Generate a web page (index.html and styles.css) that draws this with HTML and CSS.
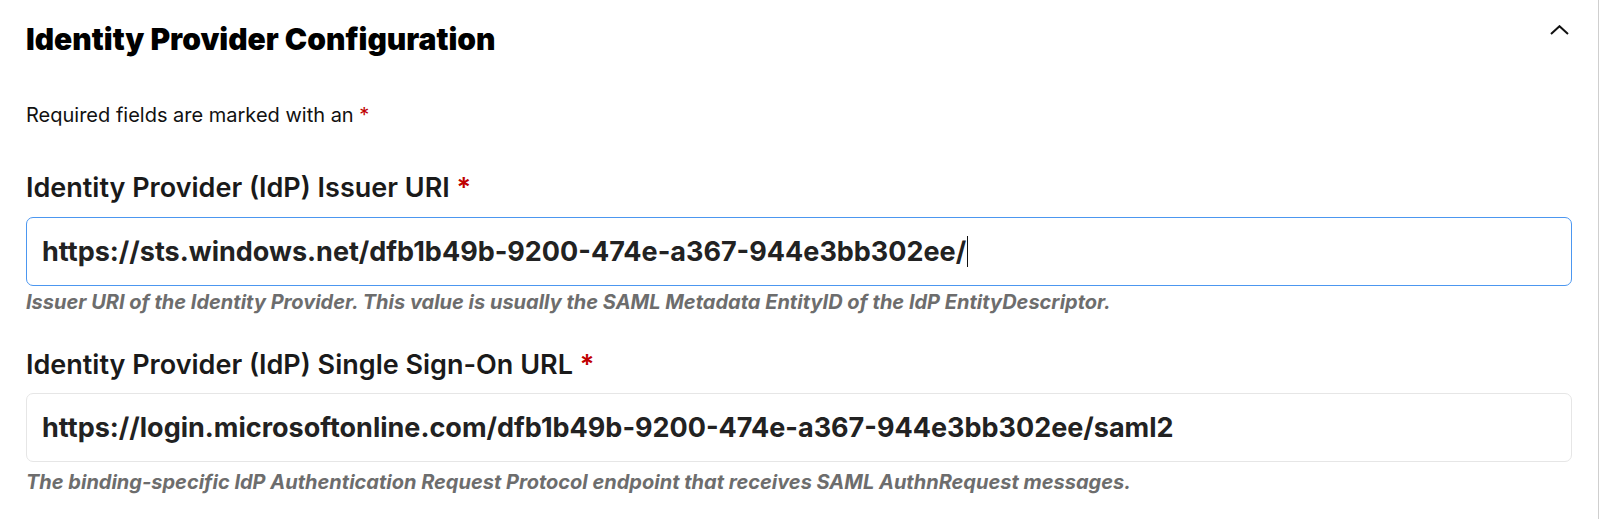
FILE: index.html
```html
<!DOCTYPE html>
<html lang="en">
<head>
<meta charset="utf-8">
<title>Identity Provider Configuration</title>
<link rel="stylesheet" href="styles.css">
</head>
<body>
<section class="panel">
  <header class="panel-head">
    <h2 class="panel-title">Identity Provider Configuration</h2>
    <button class="collapse" type="button" aria-label="Collapse">
      <svg width="19" height="10" viewBox="0 0 19 10"><polyline points="1,9 9.5,1.2 18,9" fill="none" stroke="#111" stroke-width="2"/></svg>
    </button>
  </header>
  <p class="required-note">Required fields are marked with an <span class="req">*</span></p>

  <div class="field field-first">
    <label class="field-label">Identity Provider (IdP) Issuer URI <span class="req">*</span></label>
    <div class="input focused"><span class="value">https://sts.windows.net/dfb1b49b-9200-474e-a367-944e3bb302ee/</span><span class="caret"></span></div>
    <p class="help">Issuer URI of the Identity Provider. This value is usually the SAML Metadata EntityID of the IdP EntityDescriptor.</p>
  </div>

  <div class="field">
    <label class="field-label">Identity Provider (IdP) Single Sign-On URL <span class="req">*</span></label>
    <div class="input"><span class="value">https://login.microsoftonline.com/dfb1b49b-9200-474e-a367-944e3bb302ee/saml2</span></div>
    <p class="help help-last">The binding-specific IdP Authentication Request Protocol endpoint that receives SAML AuthnRequest messages.</p>
  </div>
</section>
</body>
</html>
```
FILE: styles.css
```css
html, body {
  margin: 0;
  padding: 0;
  background: #fff;
}
body {
  font-family: Inter, "Noto Sans", "Liberation Sans", sans-serif;
  color: #111;
}
.panel {
  width: 1546px;
  height: 519px;
  padding: 21px 26px 0 26px;
  border-right: 1px solid #cfcfcf;
  overflow: hidden;
}
.panel-head {
  display: flex;
  justify-content: space-between;
  align-items: flex-start;
}
.panel-title {
  margin: 0;
  font-size: 30px;
  line-height: 36px;
  font-weight: 900;
  color: #000;
}
.collapse {
  margin: 2px 1px 0 0;
  padding: 0;
  border: 0;
  background: none;
  width: 24px;
  height: 14px;
  display: flex;
  align-items: center;
  justify-content: center;
}
.required-note {
  margin: 46px 0 0 0;
  font-size: 20px;
  line-height: 24px;
  color: #111;
}
.req {
  color: #c00000;
}
.field {
  display: flex;
  flex-direction: column;
  margin-top: 35px;
}
.field-first {
  margin-top: 45px;
}
.field-label {
  font-size: 27px;
  line-height: 32px;
  font-weight: 600;
  color: #1a1a1a;
}
.input {
  margin-top: 13px;
  height: 69px;
  box-sizing: border-box;
  border: 1.5px solid #e6e6e6;
  border-radius: 7px;
  padding: 0 15px;
  display: flex;
  align-items: center;
  font-size: 27px;
  font-weight: 700;
  color: #222;
}
.field + .field .input {
  margin-top: 12px;
}
.input.focused {
  border-color: #4c97f0;
}
.caret {
  display: inline-block;
  width: 1px;
  height: 31px;
  background: #111;
  margin-left: 1px;
}
.help {
  margin: 4px 0 0 0;
  font-size: 20px;
  line-height: 24px;
  font-weight: 700;
  font-style: italic;
  color: #6d6d6d;
}
.help-last {
  margin-top: 8px;
}
```
